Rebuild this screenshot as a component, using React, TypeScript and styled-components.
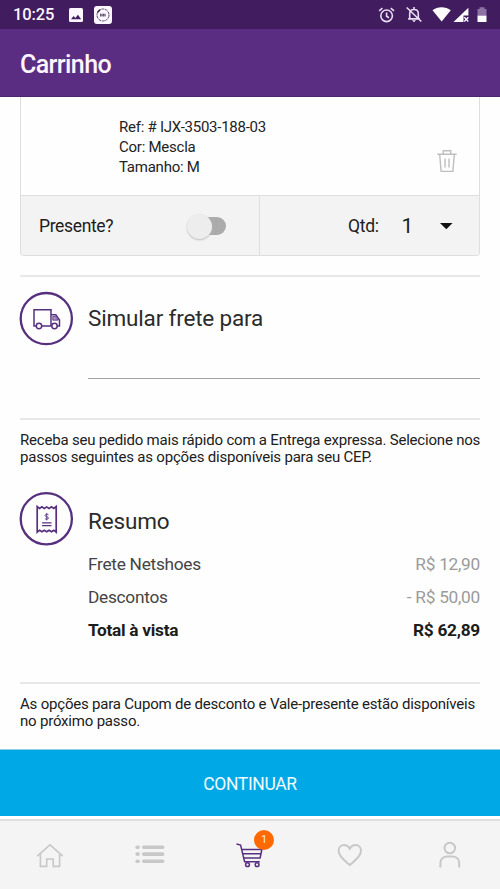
import React from 'react';
import styled, { createGlobalStyle } from 'styled-components';

const GlobalStyle = createGlobalStyle`
  * { box-sizing: border-box; }
  body { margin: 0; background: #fff; font-family: Roboto, sans-serif; color: #222; }
  svg { display: block; flex: none; overflow: visible; }
`;

const Screen = styled.div`
  width: 500px;
  height: 889px;
  display: flex;
  flex-direction: column;
  overflow: hidden;
  background: #fefefe;
`;

const StatusBar = styled.div`
  height: 29px;
  flex: none;
  background: #411d5f;
  color: #fbf6ff;
  display: flex;
  align-items: center;
  padding: 0 13px 0 13px;
`;

const Clock = styled.span`
  width: 56px;
  font: 500 16.5px/29px Roboto, sans-serif;
  letter-spacing: -0.1px;
`;

const StatusIcons = styled.div`
  display: flex;
  align-items: center;
`;

const LeftIcons = styled(StatusIcons)`
  gap: 11px;
`;

const NotificationIcons = styled(StatusIcons)`
  gap: 11px;
  margin-right: 9px;
`;

const StatusRight = styled(StatusIcons)`
  margin-left: auto;
`;

const Header = styled.header`
  height: 68px;
  flex: none;
  background: #5b2d82;
  border-bottom: 1px solid #4d2670;
  display: flex;
  align-items: center;
  padding: 4px 20px 0;
`;

const Title = styled.h1`
  margin: 0;
  color: #fdf5ff;
  font-size: 25px;
  font-weight: 500;
  letter-spacing: -0.6px;
`;

const Content = styled.main`
  height: 652px;
  flex: none;
  padding: 0 20px;
`;

const Card = styled.section`
  height: 159px;
  border: 1px solid #dedede;
  border-top: 0;
  border-radius: 0 0 4px 4px;
  overflow: hidden;
`;

const Product = styled.div`
  height: 98px;
  display: flex;
  justify-content: space-between;
  padding: 20px 22px 0 98px;
`;

const Specs = styled.div`
  font-size: 15px;
  line-height: 20px;
  letter-spacing: -0.25px;
  color: #222;
`;

const TrashSlot = styled.div`
  padding-top: 32px;
`;

const Options = styled.div`
  height: 60px;
  display: grid;
  grid-template-columns: 239px 1fr;
  background: #f3f3f3;
  border-top: 1px solid #dedede;
  font-size: 17.5px;
  letter-spacing: -0.35px;
  color: #1d1d1d;
`;

const GiftOption = styled.div`
  display: flex;
  align-items: center;
  justify-content: space-between;
  padding: 1px 33px 0 18px;
  border-right: 1px solid #dedede;
`;

const Switch = styled.div`
  width: 39px;
  height: 26px;
  display: flex;
  align-items: center;
`;

const SwitchKnob = styled.div`
  width: 25px;
  height: 25px;
  border-radius: 50%;
  background: #ededed;
  box-shadow: 0 1px 2px #bbb;
  z-index: 1;
`;

const SwitchTrack = styled.div`
  width: 26px;
  height: 18px;
  margin-left: -12px;
  border-radius: 9px;
  background: #ababab;
`;

const QuantityOption = styled.div`
  display: flex;
  align-items: center;
  justify-content: flex-end;
  padding: 1px 27px 0 0;
`;

const Quantity = styled.span`
  font-size: 21px;
  margin: 0 27px 0 23px;
`;

const Divider = styled.hr<{ $top: number }>`
  margin: ${(p) => p.$top}px 0 0;
  border: 0;
  height: 2px;
  background: #e8e8e8;
`;

const Section = styled.section<{ $top: number }>`
  display: flex;
  gap: 15px;
  padding-top: ${(p) => p.$top}px;
`;

const SectionIcon = styled.div`
  width: 53px;
  height: 54px;
  flex: none;
`;

const SectionBody = styled.div`
  flex: 1;
`;

const SectionTitle = styled.h2<{ $top: number }>`
  margin: ${(p) => p.$top}px 0 0;
  font-size: 22.5px;
  line-height: 30px;
  font-weight: 400;
  letter-spacing: -0.17px;
  color: #2b2b2b;
`;

const ZipField = styled.div`
  height: 46px;
  border-bottom: 1px solid #a2a2a2;
`;

const Note = styled.p<{ $top: number }>`
  margin: ${(p) => p.$top}px 0 0;
  font-size: 15px;
  line-height: 17.4px;
  letter-spacing: -0.2px;
  color: #202020;
  white-space: nowrap;
`;

const Summary = styled.div`
  padding-top: 12px;
`;

const SummaryRow = styled.div<{ $total?: boolean }>`
  height: 33px;
  display: flex;
  align-items: center;
  justify-content: space-between;
  font-size: 17.3px;
  letter-spacing: -0.28px;
  font-weight: ${(p) => (p.$total ? 700 : 400)};
  color: ${(p) => (p.$total ? '#1c1c1c' : '#444')};
`;

const Amount = styled.span<{ $total?: boolean }>`
  color: ${(p) => (p.$total ? '#1c1c1c' : '#9b9b9b')};
`;

const ContinueButton = styled.button`
  height: 67px;
  flex: none;
  border: 0;
  border-top: 1px solid #8fcde5;
  padding: 1px 0 0;
  background: #00a9e5;
  color: #f2fbff;
  font: 400 17.5px Roboto, sans-serif;
  letter-spacing: -0.35px;
`;

const TabBar = styled.nav`
  margin-top: 3px;
  height: 70px;
  flex: none;
  border-top: 2px solid #dfdfdf;
  background: #f4f4f4;
  display: grid;
  grid-template-columns: repeat(5, 100px);
`;

const Tab = styled.div`
  position: relative;
  display: flex;
  justify-content: center;
  padding-top: 17px;
`;

const Badge = styled.span`
  position: absolute;
  left: 54px;
  top: 9px;
  width: 20px;
  height: 20px;
  border-radius: 50%;
  background: #ff6a00;
  color: #ffe9d9;
  font-size: 11px;
  line-height: 20px;
  text-align: center;
`;

const purple = '#56307f';

const PhotoIcon = () => (
  <svg width="14" height="14" viewBox="0 0 14 14">
    <rect width="14" height="14" rx="1.5" fill="#fbf6ff" />
    <path d="M2 11.2 4.6 8l1.8 2 2.5-3.2L12.2 11.2Z" fill="#411d5f" />
  </svg>
);

const AppIcon = () => (
  <svg width="18" height="18" viewBox="0 0 18 18">
    <rect width="18" height="18" rx="3" fill="#fbf6ff" />
    <circle cx="9" cy="9" r="6" fill="none" stroke="#5d4d69" strokeWidth="1" strokeDasharray="3 .7" />
    <path d="M3.6 6.2 6 3.7" stroke="#33203f" strokeWidth="1.5" />
    <path d="M6.5 7.6v3M8 7.6v3M9.5 7.6v3M11 7.6v3M6.5 9.1h5" stroke="#5d4d69" strokeWidth=".9" />
  </svg>
);

const AlarmIcon = () => (
  <svg width="16" height="16" viewBox="0 0 16 16" fill="none" stroke="#e9dcf3" strokeWidth="1.6">
    <circle cx="8.6" cy="8.8" r="5.8" />
    <path d="M8.6 5.5v3.7l2.4 1.5M1.2 3.8 4.4 1.1M16 3.8 12.8 1.1" />
  </svg>
);

const BellOffIcon = () => (
  <svg width="17" height="17" viewBox="0 0 17 17" fill="none" stroke="#e9dcf3" strokeWidth="1.6">
    <path d="M4.7 12.6V7.7c0-2.5 1.6-4.2 4.3-4.2s4.3 1.7 4.3 4.2v4.9M3.1 12.9h11.8M9 1v2.4M1.7 1.5l14.6 14" />
    <path d="M7.5 14.5h3L9 16Z" fill="#e9dcf3" strokeWidth=".6" />
  </svg>
);

const SignalIcons = () => (
  <svg width="56" height="18" viewBox="0 0 56 18">
    <path d="M1.5 4.2C6.5.2 14.5.2 19.8 4.2L10.7 15.4Z" fill="#fff" />
    <path d="M22.5 16 37.4 1.8v7.7h-4.9V16Z" fill="#fff" />
    <path d="m33.3 11.3 4 4.2m0-4.2-4 4.2" stroke="#fff" strokeWidth="1.3" />
    <path d="M46.5 3h2V1.3h5V3h2v7h-9Z" fill="#8d72a3" />
    <path d="M46.5 9.7h9V16h-9Z" fill="#fff" />
  </svg>
);

const TrashIcon = () => (
  <svg width="20" height="24" viewBox="0 0 20 24" fill="none" stroke="#bebebe" strokeWidth="1.4">
    <path d="M.3 5.2h19.4M6.3 5V1.7h7.4V5M2.7 5.4l1.4 17h11.8l1.4-17M8 9.5v9M12 9.5v9" />
  </svg>
);

const CaretIcon = () => (
  <svg width="12" height="6" viewBox="0 0 12 6">
    <path d="M0 0h12.6L6.3 6.3Z" fill="#111" />
  </svg>
);

const TruckIcon = () => (
  <svg width="54" height="54" viewBox="0 0 54 54" fill="none" stroke={purple}>
    <circle cx="26.3" cy="26.6" r="25.6" strokeWidth="2.3" />
    <g strokeWidth="1.5">
      <path d="M16 34.1H14V17.7h17v16.4M22 34.1h9.2M31 22.8h4.8l3.7 5.3v6H37" />
      <circle cx="19" cy="34" r="2.7" />
      <circle cx="34.5" cy="34" r="2.7" />
    </g>
    <path d="M32.8 24.5h2.7l2.5 3.7h-5.2Z" fill="#aa93bf" strokeWidth=".8" />
  </svg>
);

const ReceiptIcon = () => (
  <svg width="54" height="54" viewBox="0 0 54 54" fill="none" stroke={purple}>
    <circle cx="26.3" cy="26.8" r="25.6" strokeWidth="2.3" />
    <path
      d="M17.2 40.2V14.5l2.4 2 2.3-1.6 2.4 1.6 2.4-1.6 2.4 1.6 2.4-1.6 2.3 1.6 2.4-2v25.7l-2.4-2-2.3 1.6-2.4-1.6-2.4 1.6-2.4-1.6-2.4 1.6-2.3-1.6Z"
      strokeWidth="1.7"
    />
    <path d="M28.5 22.8c-.4-.7-3.5-.8-3.5.7 0 1.6 3.5.8 3.5 2.5 0 1.5-3.1 1.4-3.6.6M26.7 21v7.4" strokeWidth=".9" />
    <path d="M22.1 30.9h9.4M22.1 33.6h9.4" strokeWidth="1.4" />
  </svg>
);

const HomeIcon = () => (
  <svg width="28" height="32" viewBox="0 0 28 32" fill="none" stroke="#c8c8c8" strokeWidth="1.6">
    <path d="M1.2 18.2 14 6.8l12.8 11.4M4.4 16v12.4h6.3V21h6.5v7.4h6.4V16" />
  </svg>
);

const ListIcon = () => (
  <svg width="30" height="32" viewBox="0 0 30 32" stroke="#c8c8c8" strokeWidth="3.6" strokeLinecap="round">
    <path d="M2.1 9.2h1M2.1 16.1h1M2.1 23.2h1M8.7 9.2h19M8.7 16.1h19M8.7 23.2h19" />
  </svg>
);

const CartIcon = () => (
  <svg width="28" height="32" viewBox="0 0 28 32" fill="none" stroke={purple} strokeWidth="1.5">
    <path d="M.5 6 4.6 7.1 8.6 23.7h15.2M5.7 11.5h20.2l-1.8 8.5H7.8M6.6 15.7h18.3" />
    <circle cx="11.5" cy="26.7" r="1.9" />
    <circle cx="21.1" cy="26.7" r="1.9" />
  </svg>
);

const HeartIcon = () => (
  <svg width="28" height="32" viewBox="0 0 28 32" fill="none" stroke="#c8c8c8" strokeWidth="2">
    <path d="M13.8 27.1C8.9 22.5 2.6 18.5 2.6 12.7 2.6 9.4 5 7 8 7c2.6 0 4.5 1.4 5.8 3.7C15.1 8.4 17 7 19.6 7c3 0 5.4 2.4 5.4 5.7 0 5.8-6.3 9.8-11.2 14.4Z" />
  </svg>
);

const UserIcon = () => (
  <svg width="28" height="32" viewBox="0 0 28 32" fill="none" stroke="#c8c8c8" strokeWidth="2">
    <circle cx="13.8" cy="10" r="5.3" />
    <path d="M4.4 29.5v-4.2c0-4.4 3-6.8 7-6.8h4.8c4 0 7 2.4 7 6.8v4.2" />
  </svg>
);

const summary = [
  { label: 'Frete Netshoes', amount: 'R$ 12,90' },
  { label: 'Descontos', amount: '- R$ 50,00' },
  { label: 'Total à vista', amount: 'R$ 62,89', total: true },
];

export default function App() {
  return (
    <>
      <GlobalStyle />
      <Screen>
        <StatusBar>
          <Clock>10:25</Clock>
          <LeftIcons>
            <PhotoIcon />
            <AppIcon />
          </LeftIcons>
          <StatusRight>
            <NotificationIcons>
              <AlarmIcon />
              <BellOffIcon />
            </NotificationIcons>
            <SignalIcons />
          </StatusRight>
        </StatusBar>
        <Header>
          <Title>Carrinho</Title>
        </Header>
        <Content>
          <Card>
            <Product>
              <Specs>
                <div>Ref: # IJX-3503-188-03</div>
                <div>Cor: Mescla</div>
                <div>Tamanho: M</div>
              </Specs>
              <TrashSlot>
                <TrashIcon />
              </TrashSlot>
            </Product>
            <Options>
              <GiftOption>
                Presente?
                <Switch>
                  <SwitchKnob />
                  <SwitchTrack />
                </Switch>
              </GiftOption>
              <QuantityOption>
                Qtd:
                <Quantity>1</Quantity>
                <CaretIcon />
              </QuantityOption>
            </Options>
          </Card>
          <Divider $top={19} />
          <Section $top={15}>
            <SectionIcon>
              <TruckIcon />
            </SectionIcon>
            <SectionBody>
              <SectionTitle $top={11}>Simular frete para</SectionTitle>
              <ZipField />
            </SectionBody>
          </Section>
          <Divider $top={39} />
          <Note $top={12}>
            Receba seu pedido mais rápido com a Entrega expressa. Selecione nos
            <br />
            passos seguintes as opções disponíveis para seu CEP.
          </Note>
          <Section $top={25}>
            <SectionIcon>
              <ReceiptIcon />
            </SectionIcon>
            <SectionBody>
              <SectionTitle $top={14}>Resumo</SectionTitle>
              <Summary>
                {summary.map((row) => (
                  <SummaryRow key={row.label} $total={row.total}>
                    <span>{row.label}</span>
                    <Amount $total={row.total}>{row.amount}</Amount>
                  </SummaryRow>
                ))}
              </Summary>
            </SectionBody>
          </Section>
          <Divider $top={35} />
          <Note $top={12}>
            As opções para Cupom de desconto e Vale-presente estão disponíveis
            <br />
            no próximo passo.
          </Note>
        </Content>
        <ContinueButton>CONTINUAR</ContinueButton>
        <TabBar>
          <Tab><HomeIcon /></Tab>
          <Tab><ListIcon /></Tab>
          <Tab>
            <CartIcon />
            <Badge>1</Badge>
          </Tab>
          <Tab><HeartIcon /></Tab>
          <Tab><UserIcon /></Tab>
        </TabBar>
      </Screen>
    </>
  );
}
